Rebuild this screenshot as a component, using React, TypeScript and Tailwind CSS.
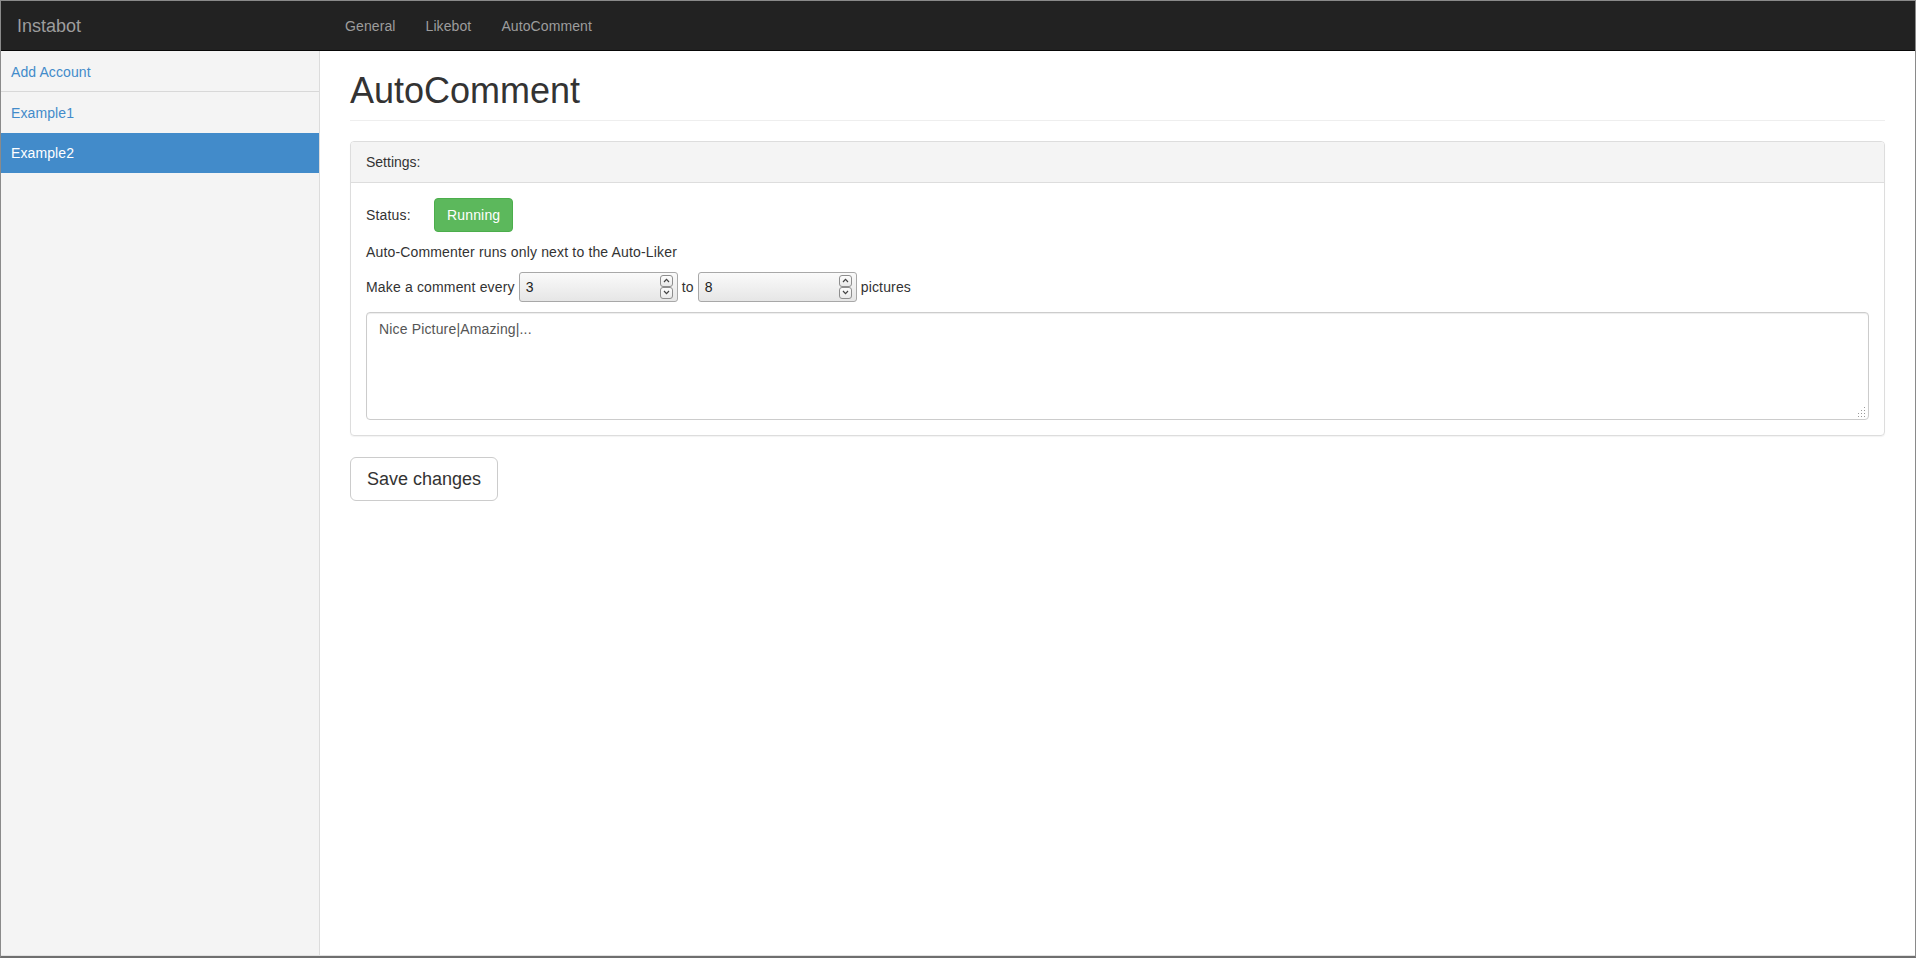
import { useState } from "react";

const sidebarItems = ["Example1", "Example2"];
const navLinks = ["General", "Likebot", "AutoComment"];

function NumberBox({ value }: { value: string }) {
  return (
    <div className="flex h-[30px] w-[159px] items-center justify-between rounded-[3px] border border-[#a8a8a8] bg-gradient-to-b from-[#fafafa] to-[#e6e6e6] pl-[6px] pr-[4px] text-[#222]">
      <span>{value}</span>
      <div className="flex flex-col">
        <span className="flex h-[12px] w-[13px] items-center justify-center rounded-[3px] border border-[#8e8e8e] bg-gradient-to-b from-[#fdfdfd] to-[#e9e9e9]">
          <svg width="7" height="5" viewBox="0 0 7 5" fill="none" stroke="#444" strokeWidth="1.2">
            <path d="M1 4L3.5 1.3L6 4" />
          </svg>
        </span>
        <span className="flex h-[12px] w-[13px] items-center justify-center rounded-[3px] border border-[#8e8e8e] bg-gradient-to-b from-[#fdfdfd] to-[#e9e9e9]">
          <svg width="7" height="5" viewBox="0 0 7 5" fill="none" stroke="#444" strokeWidth="1.2">
            <path d="M1 1L3.5 3.7L6 1" />
          </svg>
        </span>
      </div>
    </div>
  );
}

function Grip() {
  // dotted resize corner like the native one
  const dots: [number, number][] = [
    [8, 0], [8, 3], [5, 3], [8, 6], [5, 6], [2, 6], [8, 9], [5, 9], [2, 9],
  ];
  return (
    <svg className="pointer-events-none absolute bottom-[3px] right-[3px]" width="10" height="10" viewBox="0 0 10 10">
      {dots.map(([x, y], i) => (
        <rect key={i} x={x} y={y} width="1" height="1" fill="#9a9a9a" />
      ))}
    </svg>
  );
}

export default function App() {
  const [active, setActive] = useState("Example2");
  const [comments, setComments] = useState("Nice Picture|Amazing|...");

  return (
    <div className="flex h-screen flex-col overflow-hidden border-x border-t border-b-2 border-x-[#8a8a8a] border-t-[#8a8a8a] border-b-[#6f6f6f] bg-white font-['Liberation_Sans',Arial,sans-serif] text-[14px] leading-[20px] text-[#333]">
      <nav className="flex h-[50px] shrink-0 items-center border-b border-[#080808] bg-[#222]">
        <div className="w-[329px] pl-[16px] text-[18px] text-[#9d9d9d]">Instabot</div>
        <ul className="flex tracking-[0.1px]">
          {navLinks.map((l) => (
            <li key={l} className="px-[15px] py-[15px] text-[#9d9d9d] hover:text-white">
              {l}
            </li>
          ))}
        </ul>
      </nav>

      <div className="flex min-h-0 flex-1 border-b border-[#e2e2e2]">
        <aside className="w-[319px] shrink-0 border-r border-[#dcdcdc] bg-[#f4f4f4] tracking-[0.1px]">
          <div className="flex h-[41px] items-center border-b border-[#d8d8d8] px-[10px] pt-[2px] text-[#428bca]">
            Add Account
          </div>
          {sidebarItems.map((name, i) => (
            <div
              key={name}
              onClick={() => setActive(name)}
              className={
                (i === 0 ? "h-[41px] " : "h-[40px] ") +
                (active === name
                  ? "flex cursor-pointer items-center bg-[#428bca] px-[10px] text-white"
                  : "flex cursor-pointer items-center px-[10px] text-[#428bca]")
              }
            >
              {name}
            </div>
          ))}
        </aside>

        <main className="flex-1 px-[30px] pt-[20px]">
          <h1 className="mb-[20px] border-b border-[#eee] pb-[9px] text-[36px] leading-[1.1] font-normal">
            AutoComment
          </h1>

          <div className="rounded-[4px] border border-[#dddddd] shadow-[0_1px_1px_rgba(0,0,0,0.05)]">
            <div className="rounded-t-[3px] border-b border-[#dddddd] bg-[#f4f4f4] px-[15px] py-[10px]">
              Settings:
            </div>
            <div className="p-[15px] tracking-[0.16px]">
              <div className="mb-[10px] flex h-[34px] items-center">
                <span className="w-[68px]">Status:</span>
                <button className="h-[34px] rounded-[4px] border border-[#4cae4c] bg-[#5cb85c] px-[12px] text-white">
                  Running
                </button>
              </div>
              <div className="mb-[10px]">Auto-Commenter runs only next to the Auto-Liker</div>
              <div className="mb-[10px] flex h-[30px] items-center gap-[4px]">
                <span>Make a comment every</span>
                <NumberBox value="3" />
                <span>to</span>
                <NumberBox value="8" />
                <span>pictures</span>
              </div>
              <div className="relative h-[108px]">
                <textarea
                  value={comments}
                  onChange={(e) => setComments(e.target.value)}
                  className="h-full w-full resize-none rounded-[4px] border border-[#cccccc] px-[12px] py-[6px] text-[#555] shadow-[inset_0_1px_1px_rgba(0,0,0,0.075)] outline-none"
                />
                <Grip />
              </div>
            </div>
          </div>

          <button className="mt-[21px] rounded-[6px] border border-[#cccccc] bg-white px-[16px] py-[9px] text-[18px] leading-[24px] text-[#333]">
            Save changes
          </button>
        </main>
      </div>
    </div>
  );
}
